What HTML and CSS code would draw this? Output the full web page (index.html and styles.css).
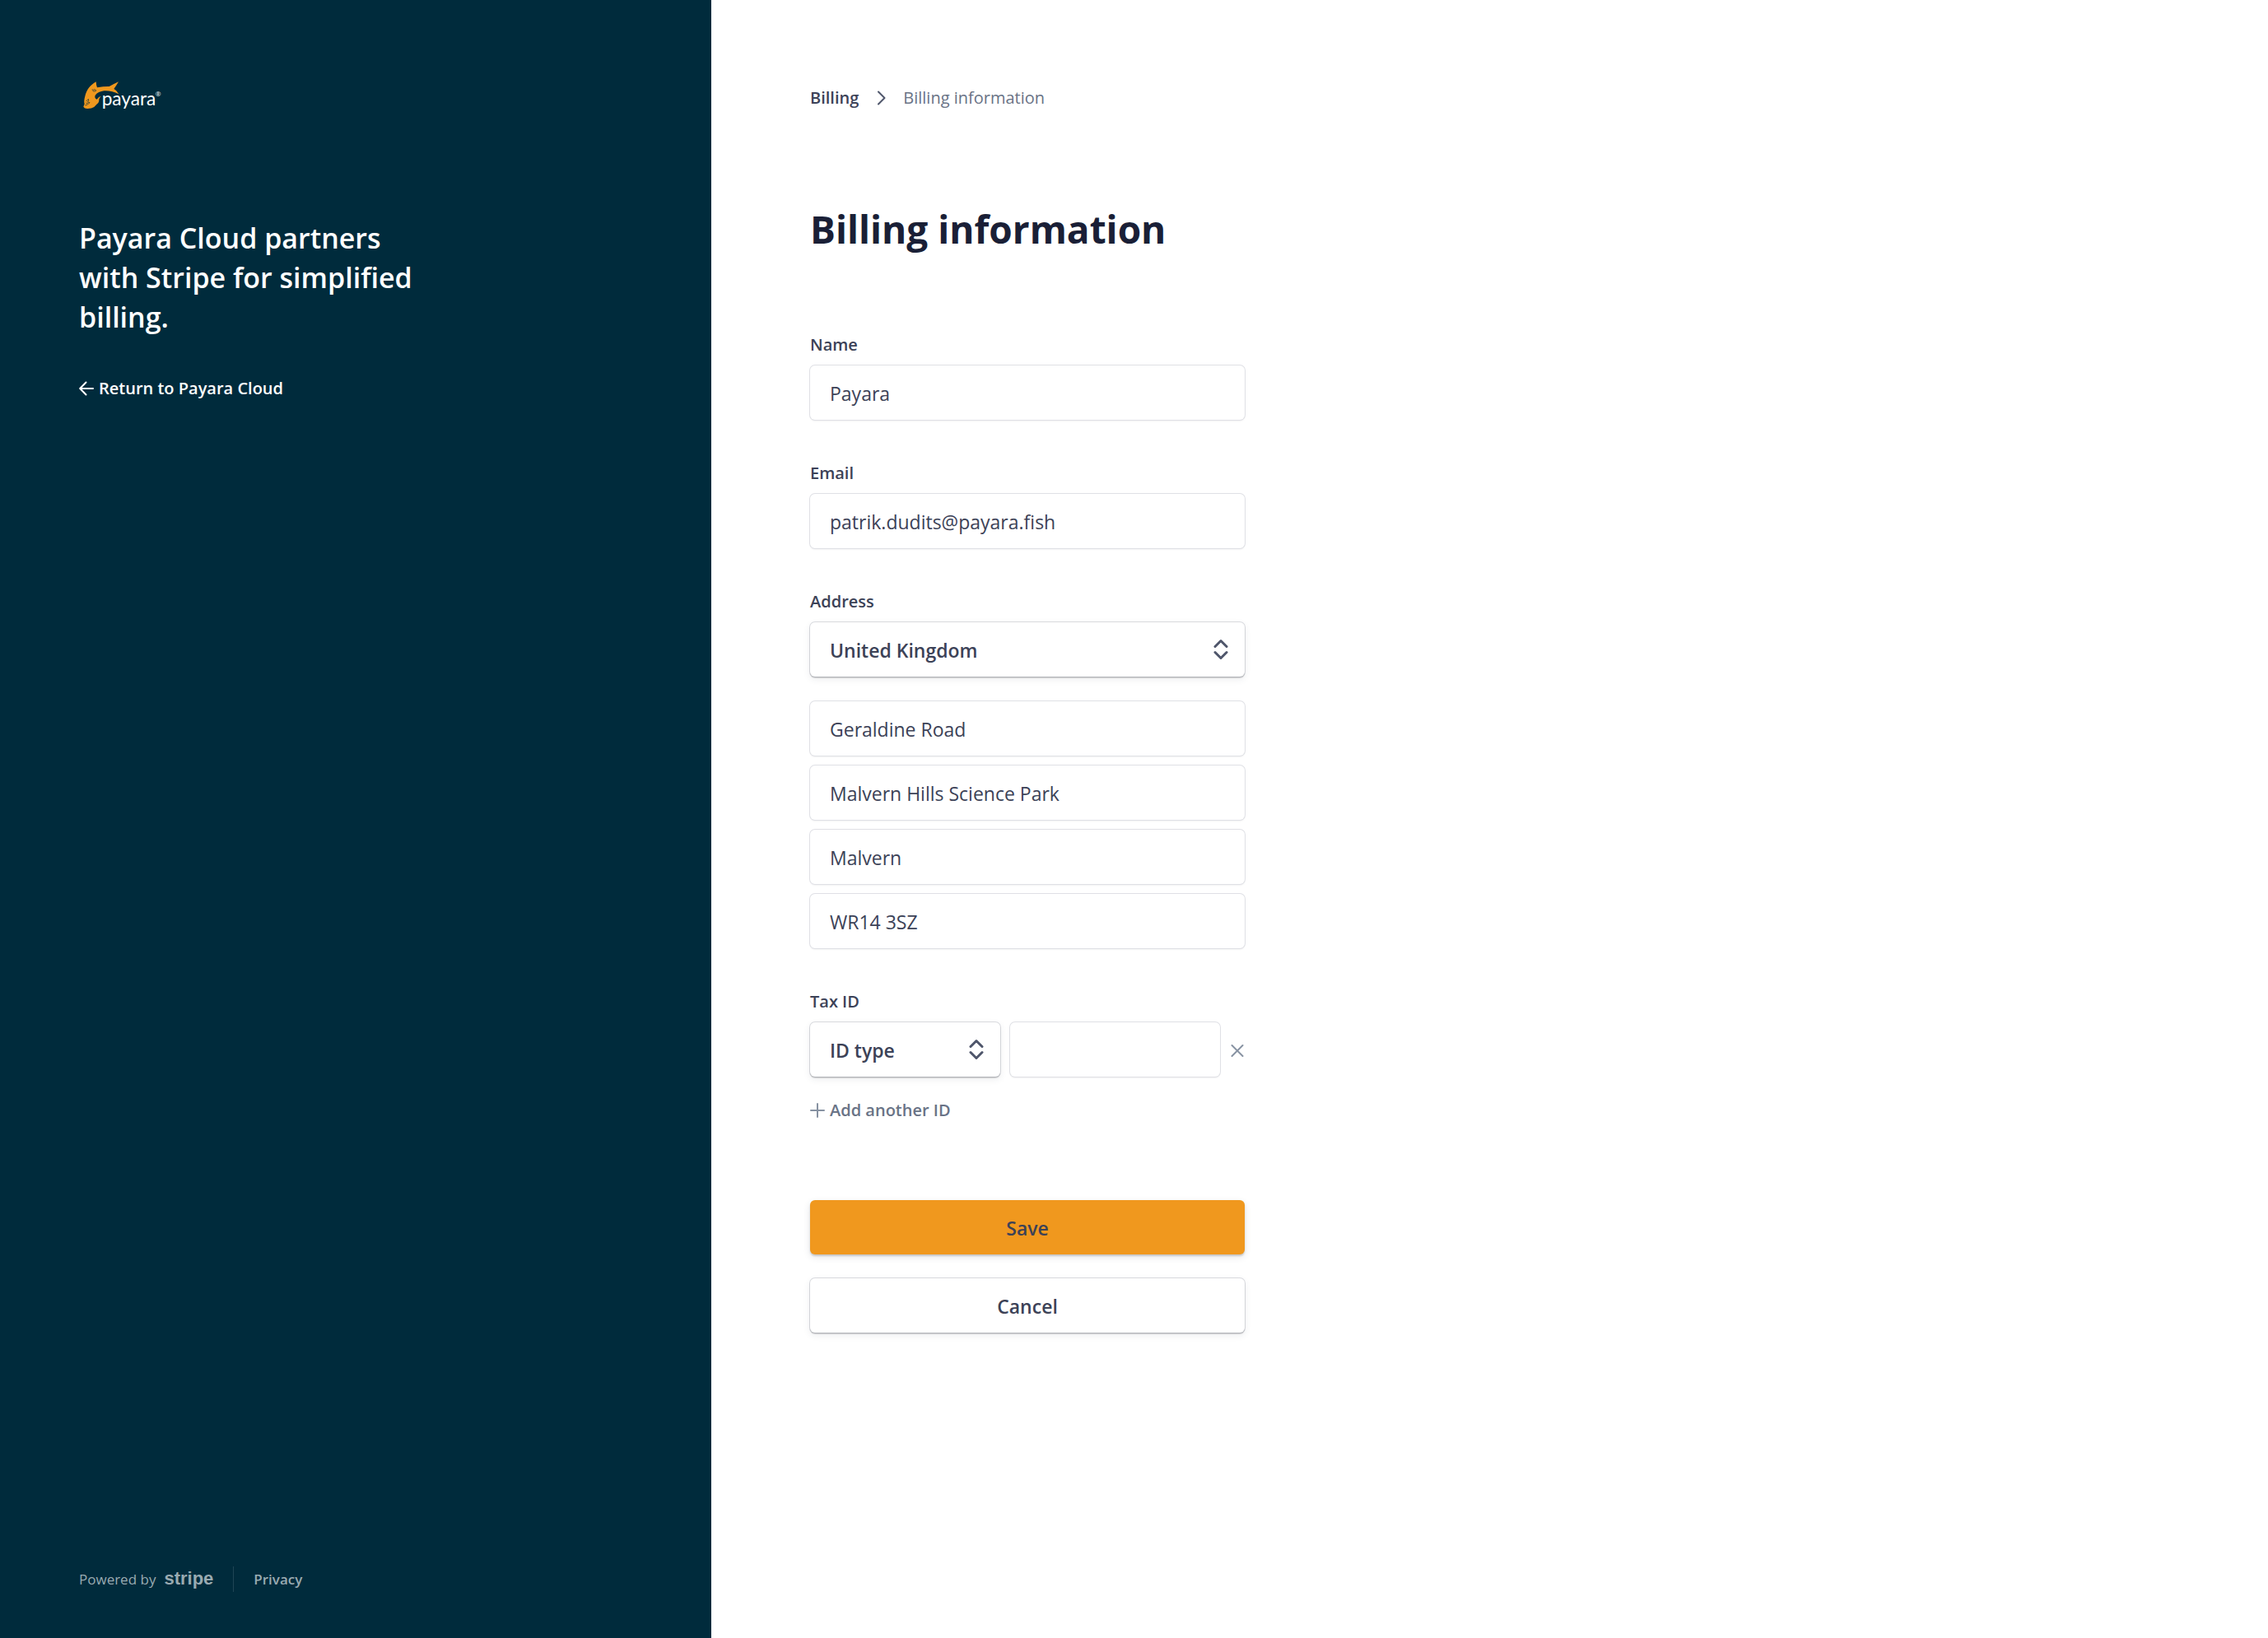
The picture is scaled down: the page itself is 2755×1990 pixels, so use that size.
FILE: index.html
```html
<!DOCTYPE html>
<html lang="en">
<head>
<meta charset="utf-8">
<meta name="viewport" content="width=device-width, initial-scale=1">
<title>Billing information</title>
<link rel="stylesheet" href="styles.css">
</head>
<body>
<div class="page">
  <aside class="sidebar">
    <svg class="logo" viewBox="48 30 300 150" role="img" aria-label="Payara">
      <path class="fish" d="M110 58C90 69 76 86 70 110C66 124 66 133 68 139L64 149Q68 157 80 156Q94 156 103 150Q110 142 118 135Q122 129 121 121Q124 114 129 110Q120 112 113 122Q103 118 107 107Q118 94 139 91Q165 89 193 103Q186 89 175 84Q184 72 192 58Q173 67 158 75Q136 75 114 79Q110 68 110 58Z"/>
      <path class="fish-detail" d="M95 87l8 8M98 85l8 8M103 85l7 4M107 94l3-5M74 129l8-8 1 6-4 5 8 2-5 5-9-4M70 144l9-3"/>
      <text class="logo-text" x="131" y="143">payara</text>
      <text class="logo-mark" x="326" y="111">®</text>
    </svg>
    <h2 class="tagline">Payara Cloud partners with Stripe for simplified billing.</h2>
    <a class="return" href="#">
      <svg class="icon" viewBox="0 0 18 18" aria-hidden="true"><path d="M17 9H1.500M8.500 1.500L1.200 9l7.300 7.500"/></svg>
      Return to Payara Cloud
    </a>
    <footer class="footer">
      <span class="powered">Powered by <span class="stripe">stripe</span></span>
      <a class="privacy" href="#">Privacy</a>
    </footer>
  </aside>
  <main class="main">
    <nav class="crumbs" aria-label="Breadcrumb">
      <a class="crumb-link" href="#">Billing</a>
      <svg class="crumb-icon" viewBox="0 0 12 18" aria-hidden="true"><path d="M2 1.500l7.500 7.500L2 16.500"/></svg>
      <span class="crumb-current">Billing information</span>
    </nav>
    <h1 class="title">Billing information</h1>
    <form class="form">
      <div class="field">
        <label class="label" for="name">Name</label>
        <input class="input" id="name" type="text" value="Payara">
      </div>
      <div class="field">
        <label class="label" for="email">Email</label>
        <input class="input" id="email" type="email" value="patrik.dudits@payara.fish">
      </div>
      <div class="field">
        <label class="label" for="country">Address</label>
        <div class="select-wrap">
          <select class="select" id="country"><option>United Kingdom</option></select>
          <svg class="select-icon" viewBox="0 0 18 26" aria-hidden="true"><path d="M2 9.500l7-7 7 7M2 16.500l7 7 7-7"/></svg>
        </div>
        <div class="lines">
          <input class="input" type="text" aria-label="Address line 1" value="Geraldine Road">
          <input class="input" type="text" aria-label="Address line 2" value="Malvern Hills Science Park">
          <input class="input" type="text" aria-label="City" value="Malvern">
          <input class="input" type="text" aria-label="Postal code" value="WR14 3SZ">
        </div>
      </div>
      <div class="field">
        <label class="label" for="idtype">Tax ID</label>
        <div class="tax-row">
          <div class="select-wrap">
            <select class="select" id="idtype"><option>ID type</option></select>
            <svg class="select-icon" viewBox="0 0 18 26" aria-hidden="true"><path d="M2 9.500l7-7 7 7M2 16.500l7 7 7-7"/></svg>
          </div>
          <input class="input" type="text" aria-label="Tax ID number">
          <button class="remove" type="button" aria-label="Remove tax ID">
            <svg class="icon" viewBox="0 0 18 18" aria-hidden="true"><path d="M2.500 3l13 13M15.500 3l-13 13"/></svg>
          </button>
        </div>
        <button class="add" type="button">
          <svg class="icon add-icon" viewBox="0 0 18 18" aria-hidden="true"><path d="M9 1v16M1 9h16"/></svg>
          Add another ID
        </button>
      </div>
      <div class="actions">
        <button class="button button-primary" type="submit">Save</button>
        <button class="button" type="button">Cancel</button>
      </div>
    </form>
  </main>
</div>
</body>
</html>
```
FILE: styles.css
```css
* {
  box-sizing: border-box;
}

body {
  margin: 0;
  background: #fff;
  color: #3c4257;
  font-family: "Open Sans", "Noto Sans", sans-serif;
  font-size: 20px;
  line-height: 30px;
}

a {
  color: inherit;
  text-decoration: none;
}

button,
input,
select {
  margin: 0;
  border: 0;
  background: #fff;
  color: inherit;
  font: inherit;
}

.page {
  display: grid;
  grid-template-columns: 864fr 1891fr;
  min-height: 100vh;
}

.sidebar {
  display: flex;
  flex-direction: column;
  align-items: flex-start;
  padding: 90px 96px 56px;
  background: #002b3c;
  color: #fff;
}

.logo {
  width: 100px;
  height: 50px;
}

.fish {
  fill: #f0981e;
}

.fish-detail {
  fill: none;
  stroke: #002b3c;
  stroke-width: 2;
}

.logo-text {
  fill: #fff;
  font-family: Lato, sans-serif;
  font-size: 68px;
}

.logo-mark {
  fill: #fff;
  font-size: 24px;
}

.tagline {
  max-width: 420px;
  margin: 125px 0 0;
  font-size: 34px;
  font-weight: 600;
  line-height: 48px;
}

.return {
  display: flex;
  align-items: center;
  gap: 6px;
  margin-top: 48px;
  font-weight: 600;
}

.icon {
  flex: none;
  width: 18px;
  height: 18px;
  fill: none;
  stroke: currentColor;
  stroke-width: 2;
  stroke-linecap: round;
  stroke-linejoin: round;
}

.footer {
  display: flex;
  align-items: center;
  margin-top: auto;
  color: #99aab1;
  font-size: 17px;
}

.powered {
  display: flex;
  align-items: baseline;
  gap: 10px;
  padding-right: 24px;
  border-right: 1px solid #1f4555;
}

.stripe {
  font-family: "Liberation Sans", sans-serif;
  font-size: 22px;
  font-weight: 700;
}

.privacy {
  padding-left: 24px;
  font-weight: 600;
}

.main {
  padding: 104px 120px;
}

.crumbs {
  display: flex;
  align-items: center;
}

.crumb-link {
  font-weight: 600;
}

.crumb-icon {
  width: 12px;
  height: 18px;
  margin: 0 20px 0 22px;
  fill: none;
  stroke: #4f566b;
  stroke-width: 2;
  stroke-linecap: round;
  stroke-linejoin: round;
}

.crumb-current {
  color: #697386;
}

.title {
  margin: 111px 0 93px;
  color: #1a1f36;
  font-size: 46px;
  font-weight: 700;
  line-height: 66px;
}

.form {
  display: flex;
  flex-direction: column;
  gap: 50px;
  max-width: 528px;
}

.field {
  display: flex;
  flex-direction: column;
  align-items: stretch;
}

.label {
  margin-bottom: 10px;
  font-size: 20px;
  font-weight: 600;
}

.input,
.select,
.button {
  width: 100%;
  min-width: 0;
  height: 66px;
  padding: 2px 24px 0;
  border-radius: 6px;
  font-size: 23px;
}

.input {
  box-shadow: 0 0 0 1px #dfe0e5, 0 2px 2px rgba(0, 0, 0, 0.05);
}

.select,
.button {
  box-shadow: 0 0 0 1px rgba(60, 66, 87, 0.18), 0 2px 1px rgba(0, 0, 0, 0.14), 0 3px 8px rgba(60, 66, 87, 0.1);
  font-weight: 600;
}

.select {
  appearance: none;
  grid-area: 1 / 1;
}

.select-wrap {
  display: grid;
  align-items: center;
}

.select-icon {
  grid-area: 1 / 1;
  justify-self: end;
  width: 18px;
  height: 26px;
  margin-right: 20px;
  fill: none;
  stroke: #4f566b;
  stroke-width: 3;
  stroke-linecap: round;
  stroke-linejoin: round;
  pointer-events: none;
}

.lines {
  display: grid;
  gap: 12px;
  margin-top: 30px;
}

.tax-row {
  display: grid;
  grid-template-columns: 231fr 255fr 18px;
  align-items: center;
  gap: 12px;
}

.remove {
  display: flex;
  padding: 2px 0 0;
  color: #8792a2;
}

.add {
  display: flex;
  align-items: center;
  align-self: flex-start;
  gap: 6px;
  margin-top: 26px;
  padding: 0;
  color: #697386;
  font-weight: 600;
}

.add-icon {
  color: #8792a2;
}

.actions {
  display: grid;
  gap: 29px;
  margin-top: 44px;
}

.button-primary {
  background: #f0981e;
  box-shadow: 0 2px 2px rgba(0, 0, 0, 0.16), 0 3px 8px rgba(60, 66, 87, 0.14);
}
```
